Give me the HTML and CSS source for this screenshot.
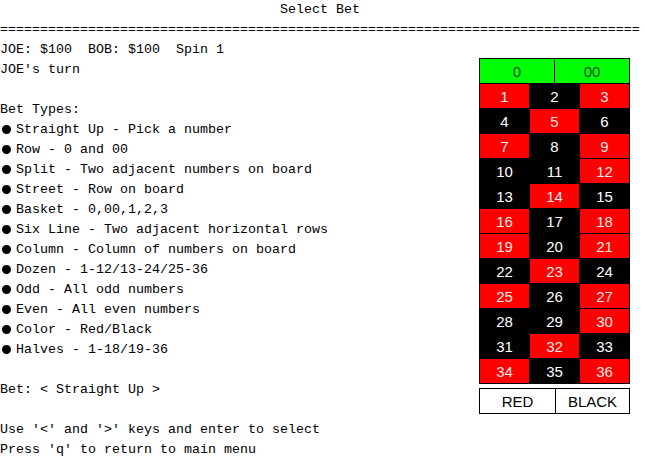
FILE: index.html
```html
<!DOCTYPE html>
<html>
<head>
<meta charset="utf-8">
<title>Select Bet</title>
<link rel="stylesheet" href="styles.css">
</head>
<body>
<div class="screen">
  <div class="line title">Select Bet</div>
  <div class="line">================================================================================</div>
  <div class="main">
    <div class="left">
      <div class="line">JOE: $100  BOB: $100  Spin 1</div>
      <div class="line">JOE's turn</div>
      <div class="line"> </div>
      <div class="line">Bet Types:</div>
      <div class="line"><span class="dot"></span>Straight Up - Pick a number</div>
      <div class="line"><span class="dot"></span>Row - 0 and 00</div>
      <div class="line"><span class="dot"></span>Split - Two adjacent numbers on board</div>
      <div class="line"><span class="dot"></span>Street - Row on board</div>
      <div class="line"><span class="dot"></span>Basket - 0,00,1,2,3</div>
      <div class="line"><span class="dot"></span>Six Line - Two adjacent horizontal rows</div>
      <div class="line"><span class="dot"></span>Column - Column of numbers on board</div>
      <div class="line"><span class="dot"></span>Dozen - 1-12/13-24/25-36</div>
      <div class="line"><span class="dot"></span>Odd - All odd numbers</div>
      <div class="line"><span class="dot"></span>Even - All even numbers</div>
      <div class="line"><span class="dot"></span>Color - Red/Black</div>
      <div class="line"><span class="dot"></span>Halves - 1-18/19-36</div>
      <div class="line"> </div>
      <div class="line">Bet: &lt; Straight Up &gt;</div>
      <div class="line"> </div>
      <div class="line">Use '&lt;' and '&gt;' keys and enter to select</div>
      <div class="line">Press 'q' to return to main menu</div>
    </div>
    <div class="right">
      <div class="board">
        <div class="zeros">
          <div class="cell green">0</div>
          <div class="cell green">00</div>
        </div>
        <div class="grid">
          <div class="cell red">1</div><div class="cell black">2</div><div class="cell red">3</div>
          <div class="cell black">4</div><div class="cell red">5</div><div class="cell black">6</div>
          <div class="cell red">7</div><div class="cell black">8</div><div class="cell red">9</div>
          <div class="cell black">10</div><div class="cell black">11</div><div class="cell red">12</div>
          <div class="cell black">13</div><div class="cell red">14</div><div class="cell black">15</div>
          <div class="cell red">16</div><div class="cell black">17</div><div class="cell red">18</div>
          <div class="cell red">19</div><div class="cell black">20</div><div class="cell red">21</div>
          <div class="cell black">22</div><div class="cell red">23</div><div class="cell black">24</div>
          <div class="cell red">25</div><div class="cell black">26</div><div class="cell red">27</div>
          <div class="cell black">28</div><div class="cell black">29</div><div class="cell red">30</div>
          <div class="cell black">31</div><div class="cell red">32</div><div class="cell black">33</div>
          <div class="cell red">34</div><div class="cell black">35</div><div class="cell red">36</div>
        </div>
      </div>
      <div class="colors">
        <div class="color-opt first">RED</div>
        <div class="color-opt">BLACK</div>
      </div>
    </div>
  </div>
</div>
</body>
</html>
```

FILE: styles.css
```css
html, body {
  margin: 0;
  padding: 0;
  background: #ffffff;
}

.screen {
  width: 640px;
  font-family: "Liberation Mono", "Courier New", monospace;
  font-size: 13.333px;
  color: #000000;
}

.line {
  height: 20px;
  line-height: 20px;
  white-space: pre;
}

.title {
  text-align: center;
}

.main {
  display: flex;
}

.left {
  width: 479px;
}

.dot {
  display: inline-block;
  width: 9px;
  height: 9px;
  margin-left: 2px;
  margin-right: 5px;
  border-radius: 50%;
  background: #000000;
  vertical-align: -1px;
}

.right {
  padding-top: 18px;
  display: flex;
  flex-direction: column;
}

.board {
  width: 149px;
  padding: 1px;
  background: #000000;
  display: flex;
  flex-direction: column;
  gap: 1px;
}

.zeros {
  display: flex;
  gap: 1px;
}

.zeros .cell {
  width: 74px;
}

.grid {
  display: grid;
  grid-template-columns: 49px 49px 49px;
  grid-auto-rows: 24px;
  gap: 1px;
}

.cell {
  height: 24px;
  display: flex;
  align-items: center;
  justify-content: center;
  font-family: "Liberation Sans", Arial, sans-serif;
  font-size: 15px;
  color: #ffffff;
}

.green {
  background: #00ff00;
  color: #005000;
}

.red {
  background: #ff0000;
  color: #ffe6e6;
}

.black {
  background: #000000;
}

.colors {
  margin-top: 4px;
  width: 149px;
  height: 24px;
  border: 1px solid #000000;
  display: flex;
  font-family: "Liberation Sans", Arial, sans-serif;
  font-size: 15px;
}

.color-opt {
  flex: 1;
  display: flex;
  align-items: center;
  justify-content: center;
}

.color-opt.first {
  flex: 0 0 75px;
  border-right: 1px solid #000000;
}
```
